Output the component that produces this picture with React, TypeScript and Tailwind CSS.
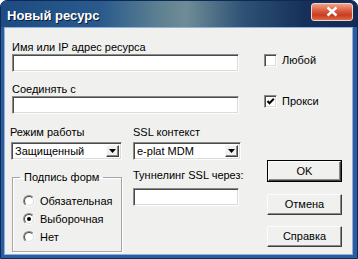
import React from 'react';

const font = { fontFamily: '"Liberation Sans", Arial, sans-serif' };

const Edit: React.FC<{ className?: string }> = ({ className = '' }) => (
  <div
    className={`bg-white border border-t-[#8a8a8a] border-l-[#8a8a8a] border-r-[#fcfcfc] border-b-[#fcfcfc] shadow-[inset_1px_1px_0_#4a4a4a,inset_-1px_-1px_0_#dcdcdc] ${className}`}
  />
);

const Combo: React.FC<{ value: string; className?: string }> = ({ value, className = '' }) => (
  <div
    className={`flex items-stretch bg-white border border-t-[#8a8a8a] border-l-[#8a8a8a] border-r-[#fcfcfc] border-b-[#fcfcfc] shadow-[inset_1px_1px_0_#4a4a4a,inset_-1px_-1px_0_#dcdcdc] p-[2px] ${className}`}
  >
    <div className="flex-1 pl-[1px] text-[11px] leading-[13px] text-black">{value}</div>
    <div className="w-[13px] flex items-center justify-center bg-[#f0f0ee] border border-t-[#f8f8f8] border-l-[#f8f8f8] border-r-[#404040] border-b-[#404040] shadow-[inset_-1px_-1px_0_#8a8a8a]">
      <svg width="7" height="4" viewBox="0 0 7 4">
        <path d="M0 0h7L3.5 4z" fill="#000" />
      </svg>
    </div>
  </div>
);

const Check: React.FC<{ label: string; checked?: boolean }> = ({ label, checked }) => (
  <div className="flex items-center gap-[5px] h-[13px]">
    <div className="w-[13px] h-[13px] bg-white border border-t-[#8a8a8a] border-l-[#8a8a8a] border-r-[#fcfcfc] border-b-[#fcfcfc] shadow-[inset_1px_1px_0_#4a4a4a,inset_-1px_-1px_0_#dcdcdc] flex items-center justify-center">
      {checked && (
        <svg width="9" height="9" viewBox="0 0 9 9">
          <path d="M1.5 4l2 2.2L7.8 1.8" stroke="#000" strokeWidth="2" fill="none" />
        </svg>
      )}
    </div>
    <span className="text-[11px] leading-[13px] text-black">{label}</span>
  </div>
);

const Radio: React.FC<{ label: string; checked?: boolean }> = ({ label, checked }) => (
  <div className="flex items-center gap-[5px] h-[18px]">
    <div className="w-[12px] h-[12px] rounded-full border border-t-[#8a8a8a] border-l-[#8a8a8a] border-r-[#fcfcfc] border-b-[#fcfcfc]">
      <div className="w-full h-full rounded-full bg-white border border-t-[#4a4a4a] border-l-[#4a4a4a] border-r-[#dcdcdc] border-b-[#dcdcdc] flex items-center justify-center">
        {checked && <div className="w-[4px] h-[4px] rounded-full bg-black" />}
      </div>
    </div>
    <span className="text-[11px] leading-[13px] text-black">{label}</span>
  </div>
);

const Button: React.FC<{ label: string; isDefault?: boolean; className?: string }> = ({
  label,
  isDefault,
  className = '',
}) => (
  <div className={`${isDefault ? 'border border-black' : ''} ${className}`}>
    <div className="h-full flex items-center justify-center bg-[#f0f0ee] border border-t-[#fcfcfc] border-l-[#fcfcfc] border-r-[#404040] border-b-[#404040] shadow-[inset_-1px_-1px_0_#8a8a8a] text-[11px] font-normal text-black">
      {label}
    </div>
  </div>
);

export default function App() {
  return (
    <div className="w-[358px] h-[259px] bg-white" style={font}>
      <div className="h-full flex flex-col rounded-t-[7px] overflow-hidden bg-[#2a5c9e] border border-[#0c2a55]">
        {/* title bar */}
        <div className="h-[26px] flex items-center justify-between pl-[6px] pr-[4px] bg-[linear-gradient(90deg,#1d4b82_0%,#2a5a8c_28%,#5f8291_45%,#6f8c96_52%,#2d5275_68%,#17305a_85%,#132a52_100%)]">
          <span className="text-white font-bold text-[13px] leading-[16px] mt-[3px] [text-shadow:1px_1px_0_#0b1d3a]">
            Новый ресурс
          </span>
          <div className="w-[42px] h-[18px] mb-[5px] rounded-[3px] border border-[#f2d6cc] bg-[linear-gradient(180deg,#f0a08a_0%,#d9583a_45%,#c63e22_70%,#e06a48_100%)] flex items-center justify-center">
            <svg width="12" height="11" viewBox="0 0 12 11">
              <path d="M1.5 1.5l9 8M10.5 1.5l-9 8" stroke="#fff" strokeWidth="2.4" />
            </svg>
          </div>
        </div>

        {/* frame + client */}
        <div className="flex-1 flex pl-[3px] pr-[4px] pb-[3px]">
          <div className="flex-1 bg-[#f0f0ee] border border-[#8fb1dc] pl-[6px] pt-[13px] text-black">
            {/* row 1 */}
            <div className="flex ml-[1px]">
              <div className="w-[227px] flex flex-col">
                <span className="text-[11px] leading-[13px]">Имя или IP адрес ресурса</span>
                <Edit className="h-[18px]" />
              </div>
              <div className="ml-[25px] mt-[13px]">
                <Check label="Любой" />
              </div>
            </div>

            {/* row 2 */}
            <div className="flex ml-[1px] mt-[11px]">
              <div className="w-[227px] flex flex-col">
                <span className="text-[11px] leading-[13px]">Соединять с</span>
                <Edit className="h-[18px]" />
              </div>
              <div className="ml-[25px] mt-[12px]">
                <Check label="Прокси" checked />
              </div>
            </div>

            {/* row 3 */}
            <div className="flex mt-[12px]">
              <div className="w-[111px] flex flex-col">
                <span className="text-[11px] leading-[13px] -ml-[1px]">Режим работы</span>
                <Combo value="Защищенный" className="mt-[3px] h-[18px]" />
                <fieldset className="mt-[11px] ml-[1px] h-[81px] border border-[#a6a6a6] shadow-[inset_1px_1px_0_#fff,1px_1px_0_#fff]">
                  <legend className="ml-[7px] px-[4px] text-[11px] leading-[13px]">Подпись форм</legend>
                  <div className="mt-[8px] pl-[10px] flex flex-col">
                    <Radio label="Обязательная" />
                    <Radio label="Выборочная" checked />
                    <Radio label="Нет" />
                  </div>
                </fieldset>
              </div>

              <div className="w-[108px] ml-[11px] flex flex-col">
                <span className="text-[11px] leading-[13px]">SSL контекст</span>
                <Combo value="e-plat MDM" className="mt-[3px] h-[18px]" />
                <span className="mt-[9px] text-[11px] leading-[13px] whitespace-nowrap">
                  Туннелинг SSL через:
                </span>
                <Edit className="mt-[6px] h-[18px] w-[106px]" />
              </div>

              <div className="w-[75px] ml-[26px] pt-[34px] flex flex-col">
                <Button label="OK" isDefault className="h-[22px]" />
                <Button label="Отмена" className="mt-[12px] h-[21px]" />
                <Button label="Справка" className="mt-[11px] h-[21px]" />
              </div>
            </div>
          </div>
        </div>
      </div>
    </div>
  );
}
